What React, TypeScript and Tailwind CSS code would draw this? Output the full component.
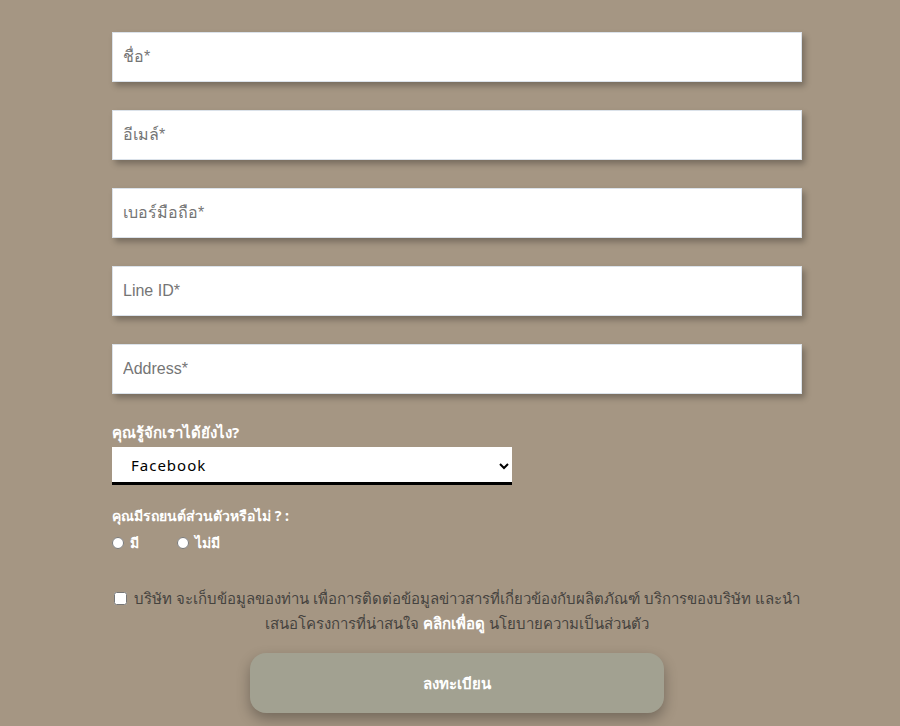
import { useState } from "react";

const fields = ["ชื่อ*", "อีเมล์*", "เบอร์มือถือ*", "Line ID*", "Address*"];

export default function App() {
  const [car, setCar] = useState("");

  return (
    <div className="min-h-screen bg-[#a59683] pt-[32px] font-['Liberation_Sans',sans-serif]">
      <form className="w-[690px] ml-[112px]">
        {/* text inputs */}
        <div className="flex flex-col gap-[28px]">
          {fields.map((f) => (
            <input
              key={f}
              type="text"
              placeholder={f}
              className="h-[50px] w-full bg-white border border-[#dbe2ea] px-[10px] text-[16px] text-[#333] placeholder:text-[#757575] shadow-[3px_4px_6px_rgba(0,0,0,0.28)] outline-none"
            />
          ))}
        </div>

        {/* how did you find us */}
        <label className="block mt-[27px] text-[15px] font-bold text-white font-['Noto_Sans',sans-serif] leading-[22px]">
          คุณรู้จักเราได้ยังไง?
        </label>
        <select
          defaultValue="Facebook"
          className="mt-[4px] block w-[400px] h-[38px] bg-white border-0 border-b-[3px] border-black pl-[15px] pr-[8px] text-[15px] tracking-[1px] text-black font-['Noto_Sans',sans-serif] outline-none"
        >
          <option>Facebook</option>
          <option>Instagram</option>
          <option>Google</option>
          <option>เพื่อนแนะนำ</option>
        </select>

        {/* car */}
        <p className="mt-[20px] text-[14px] font-bold text-white font-['Noto_Sans',sans-serif] leading-[22px]">
          คุณมีรถยนต์ส่วนตัวหรือไม่ ? :
        </p>
        <div className="mt-[5px] flex items-center text-[14px] text-white font-bold font-['Noto_Sans',sans-serif]">
          <label className="flex items-center gap-[6px] w-[65px]">
            <input
              type="radio"
              name="car"
              checked={car === "yes"}
              onChange={() => setCar("yes")}
              className="m-0 w-[12px] h-[12px] accent-white"
            />
            มี
          </label>
          <label className="flex items-center gap-[6px]">
            <input
              type="radio"
              name="car"
              checked={car === "no"}
              onChange={() => setCar("no")}
              className="m-0 w-[12px] h-[12px] accent-white"
            />
            ไม่มี
          </label>
        </div>

        {/* consent */}
        <div className="mt-[33px] text-center text-[15px] leading-[25px] text-[#45433f] font-['Noto_Sans',sans-serif]">
          <input type="checkbox" className="mr-[7px] w-[13px] h-[13px] align-[-1px]" />
          บริษัท จะเก็บข้อมูลของท่าน เพื่อการติดต่อข้อมูลข่าวสารที่เกี่ยวข้องกับผลิตภัณฑ์ บริการของบริษัท และนำ
          <br />
          เสนอโครงการที่น่าสนใจ <span className="font-bold text-white">คลิกเพื่อดู</span> นโยบายความเป็นส่วนตัว
        </div>

        {/* submit */}
        <div className="mt-[17px] flex justify-center">
          <button
            type="button"
            className="w-[414px] h-[60px] rounded-[16px] bg-[#a2a191] text-white text-[15px] font-bold font-['Noto_Sans',sans-serif] shadow-[0_6px_14px_rgba(0,0,0,0.3)]"
          >
            ลงทะเบียน
          </button>
        </div>
      </form>
    </div>
  );
}
